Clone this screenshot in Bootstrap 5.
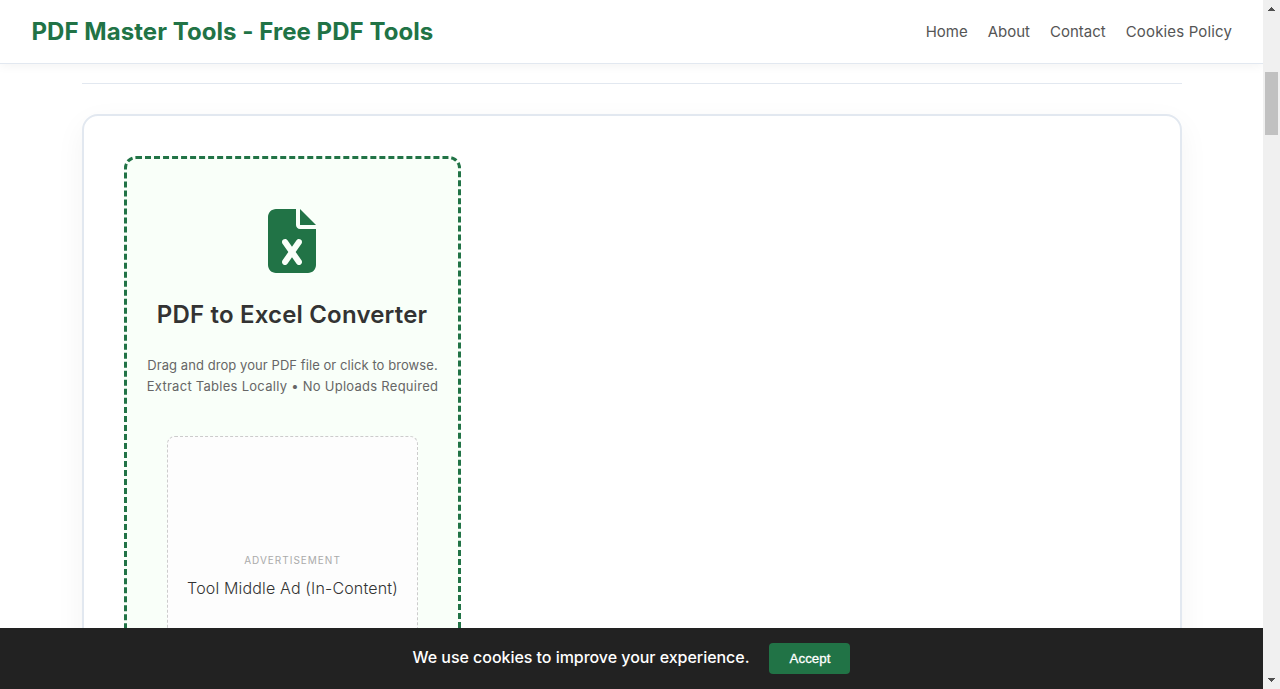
<!DOCTYPE html>
<html lang="en">
<head>
<meta charset="utf-8">
<meta name="viewport" content="width=device-width, initial-scale=1">
<title>PDF Master Tools</title>
<link href="https://cdn.jsdelivr.net/npm/bootstrap@5.3.0/dist/css/bootstrap.min.css" rel="stylesheet">
<style>
:root { --brand: #217346; --line: #e2e8f0; }
body { font-family: Inter, sans-serif; color: #333; background: #fff; height: 689px; }
.site-header { height: 64px; padding: 0 31px 0 32px; border-bottom: 1px solid #e2e8f0; box-shadow: 0 2px 10px rgba(0,0,0,.05); z-index: 2; }
.site-title { font-size: 24px; line-height: 36px; font-weight: 700; color: var(--brand); letter-spacing: .05px; margin-left: -.5px; }
.site-nav { gap: 20px; font-size: 15px; line-height: 24px; }
.site-nav a { color: #555; }
.site-nav a:last-child { letter-spacing: .15px; }
.page-wrap { width: 1100px; margin-left: 82px; padding-top: 19px; }
.divider { height: 1px; background: var(--line); margin-bottom: 30px; }
.tool-card { height: 700px; padding: 40px; border: 2px solid var(--line); border-radius: 16px; background: #fff; box-shadow: 0 10px 30px rgba(0,0,0,.05); }
.drop-zone { width: 337px; height: 700px; padding: 50px 17px; border: 3px dashed var(--brand); border-radius: 12px; background: #f9fff9; }
.file-icon { margin-right: 1px; }
.drop-zone h2 { font-size: 24px; line-height: 36px; font-weight: 600; letter-spacing: .19px; margin: 24px 1px 22px 0; }
.hint { font-size: 13px; line-height: 21px; color: #666; margin: 0; letter-spacing: .07px; }
.hint-privacy { letter-spacing: .27px; }
.ad-slot { width: 251px; height: 280px; margin-top: 39px; border: 1px dashed #ccc; border-radius: 8px; background: #fdfdfd; }
.ad-label { font-size: 10px; line-height: 16px; letter-spacing: 1px; color: #aaa; margin-bottom: 7px; }
.ad-text { font-size: 16px; line-height: 26px; font-weight: 300; letter-spacing: .16px; }
.cookie-bar { height: 61px; background: #222; gap: 20px; z-index: 3; }
.cookie-bar span { font-size: 16px; font-weight: 500; letter-spacing: -.04px; color: #fff; padding-bottom: 3px; }
.accept-btn { width: 81px; height: 31px; padding: 0; font-family: "Liberation Sans", sans-serif; font-size: 13.333px; -webkit-text-stroke: .3px #fff; border: 0; border-radius: 4px; color: #fff; background: var(--brand); }
.scroll-track { width: 17px; background: #f0f0f0; }
.scroll-thumb { width: 13px; height: 63px; margin-top: 55px; background: #c1c1c1; }
</style>
</head>
<body class="d-flex overflow-hidden">
<div class="d-flex flex-column flex-grow-1 overflow-hidden">
  <header class="site-header bg-white d-flex align-items-center justify-content-between flex-shrink-0 position-relative">
    <div class="site-title text-nowrap">PDF Master Tools - Free PDF Tools</div>
    <nav class="site-nav d-flex text-nowrap">
      <a class="text-decoration-none" href="#">Home</a>
      <a class="text-decoration-none" href="#">About</a>
      <a class="text-decoration-none" href="#">Contact</a>
      <a class="text-decoration-none" href="#">Cookies Policy</a>
    </nav>
  </header>
  <main class="flex-grow-1" style="min-height:0">
    <div class="page-wrap">
      <div class="divider"></div>
      <section class="tool-card">
        <div class="drop-zone d-flex flex-column align-items-center text-center text-nowrap">
          <svg class="file-icon flex-shrink-0" width="48" height="64" viewBox="0 0 384 512" fill="#217346" aria-hidden="true"><path d="M64 0C28.7 0 0 28.7 0 64V448c0 35.3 28.7 64 64 64H320c35.3 0 64-28.7 64-64V160H256c-17.7 0-32-14.3-32-32V0H64zM256 0V128H384L256 0zM155.7 250.2L192 302.1l36.3-51.9c7.6-10.9 22.6-13.5 33.4-5.9s13.5 22.6 5.9 33.4L221.3 344l46.4 66.2c7.6 10.9 5 25.8-5.9 33.4s-25.8 5-33.4-5.9L192 385.8l-36.3 51.9c-7.6 10.9-22.6 13.5-33.4 5.9s-13.5-22.6-5.9-33.4L162.7 344l-46.4-66.2c-7.6-10.9-5-25.8 5.9-33.4s25.8-5 33.4 5.9z"/></svg>
          <h2>PDF to Excel Converter</h2>
          <p class="hint">Drag and drop your PDF file or click to browse.<br><span class="hint-privacy">Extract Tables Locally • No Uploads Required</span></p>
          <div class="ad-slot d-flex flex-column align-items-center justify-content-center flex-shrink-0">
            <div class="ad-label text-uppercase">Advertisement</div>
            <div class="ad-text">Tool Middle Ad (In-Content)</div>
          </div>
        </div>
      </section>
    </div>
  </main>
  <footer class="cookie-bar d-flex align-items-center justify-content-center flex-shrink-0 position-relative">
    <span>We use cookies to improve your experience.</span>
    <button class="accept-btn" type="button">Accept</button>
  </footer>
</div>
<div class="scroll-track d-flex flex-column align-items-center flex-shrink-0">
  <svg class="d-block" width="17" height="17" viewBox="0 0 17 17" fill="#505050" shape-rendering="crispEdges"><path d="M5 11V10H6V9H7V8H8V7H9V8H10V9H11V10H12V11z"/></svg>
  <div class="scroll-thumb"></div>
  <svg class="d-block mt-auto" width="17" height="17" viewBox="0 0 17 17" fill="#505050" shape-rendering="crispEdges"><path d="M5 6V7H6V8H7V9H8V10H9V9H10V8H11V7H12V6z"/></svg>
</div>
<script src="https://cdn.jsdelivr.net/npm/bootstrap@5.3.0/dist/js/bootstrap.bundle.min.js"></script>
</body>
</html>
